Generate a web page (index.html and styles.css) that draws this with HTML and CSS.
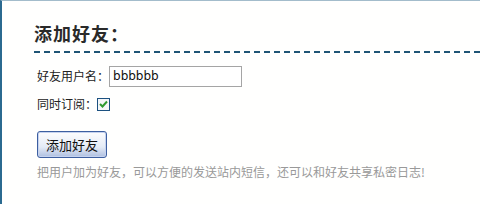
FILE: index.html
```html
<!DOCTYPE html>
<html lang="zh-CN">
<head>
<meta charset="UTF-8"/>
<title>添加好友</title>
<link rel="stylesheet" href="styles.css">
</head>
<body>
<div class="panel">
  <h3 class="title">添加好友：</h3>
  <form class="add-form">
    <div class="row">
      <label for="uname">好友用户名：</label>
      <input type="text" id="uname" class="text-input" value="bbbbbb">
    </div>
    <div class="row">
      <label for="sub">同时订阅：</label>
      <span class="check"><svg width="9" height="8" viewBox="0 0 9 8"><path d="M1 4 L3.5 6.5 L8 1.5" fill="none" stroke="#2f9a2f" stroke-width="2"/></svg></span>
    </div>
    <button type="button" class="btn">添加好友</button>
    <p class="hint">把用户加为好友，可以方便的发送站内短信，还可以和好友共享私密日志!</p>
  </form>
</div>
</body>
</html>
```

FILE: styles.css
```css
*{box-sizing:border-box;margin:0;padding:0;}
html,body{height:100%;}
body{font-family:"Noto Sans CJK SC","DejaVu Sans",sans-serif;font-size:12px;color:#222;background:#fff;overflow:hidden;}
.panel{height:100%;border-left:2px solid #2b6a90;border-top:1px solid #a3bccb;padding:20px 0 0 32px;background:#fffffe;}
.title{font-size:18px;font-weight:bold;color:#2a2a2a;line-height:24px;letter-spacing:1px;padding-bottom:6px;border-bottom:2px dashed #1f5475;margin-bottom:12px;}
.add-form{padding-left:3px;}
.row{display:flex;align-items:center;height:22px;margin-bottom:6px;}
.row label{line-height:22px;}
.text-input{width:133px;height:21px;border:1px solid #a5a5a5;font-family:"DejaVu Sans",sans-serif;font-size:12px;padding:0 3px;color:#111;outline:none;}
.check{width:13px;height:13px;border:1px solid #1c5180;background:#f4f6f8;display:flex;align-items:center;justify-content:center;}
.btn{margin:10px 0 0 0;width:70px;height:27px;border:1px solid #3d5fa0;border-radius:3px;background:linear-gradient(#fdfdfe,#e4ebf6 60%,#aebfe0);font-family:"Noto Sans CJK SC",sans-serif;font-size:13px;color:#111;box-shadow:inset 0 0 0 1px #c6d3ef;}
.hint{margin-top:6px;color:#999;line-height:16px;}
```
